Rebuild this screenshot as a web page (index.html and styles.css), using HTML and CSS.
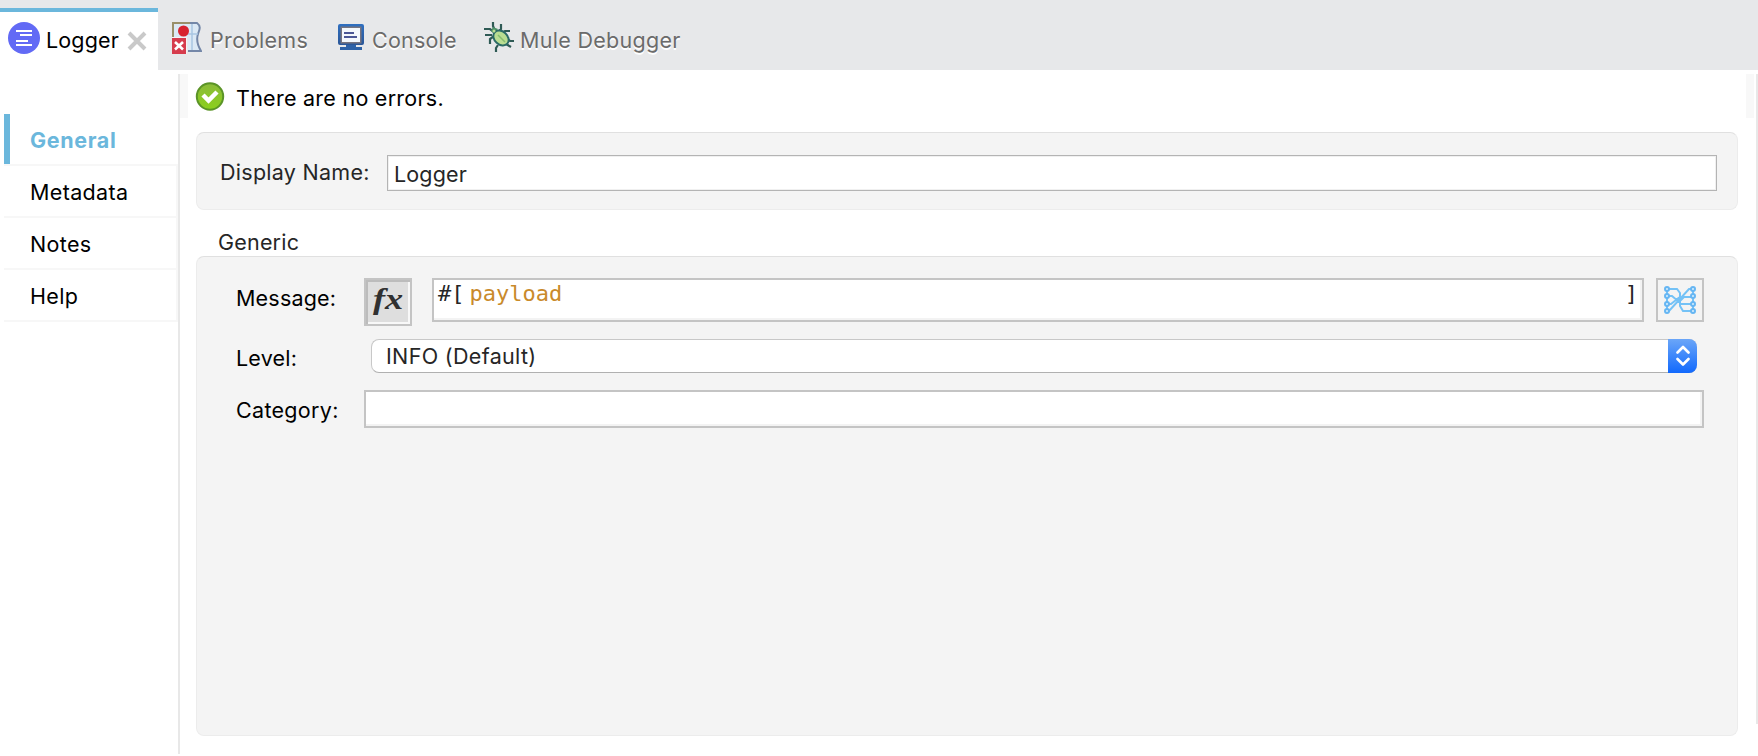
FILE: index.html
```html
<!DOCTYPE html>
<html lang="en">
<head>
<meta charset="utf-8">
<title>Logger</title>
<link rel="stylesheet" href="styles.css">
</head>
<body>
<header class="tabs">
  <div class="tab tab-active">
    <svg class="icon-logger" width="32" height="32" viewBox="0 0 32 32"><circle cx="16" cy="16" r="16" fill="#626af5"/><path d="M8 9h16M12 13h12M8 19h12M8 23h16" stroke="#fff" stroke-width="2"/></svg>
    <span class="label t-logger">Logger</span>
    <svg class="icon-close" width="20" height="20" viewBox="0 0 20 20"><path d="M2 2l16 16M18 2L2 18" stroke="#c9c9c9" stroke-width="4"/></svg>
  </div>
  <div class="tab tab-problems">
    <svg width="30" height="32" viewBox="0 0 30 32"><path d="M1 1h24c4 3 3 6 1 11c-2 6 0 12 3 17H16V16H1z" fill="#dce9f5"/><path d="M18 1h7c4 3 3 6 1 11c-2 6 0 12 3 17H16" fill="none" stroke="#7487a8" stroke-width="2"/><path d="M1 16V1h17" fill="none" stroke="#9a8f6a" stroke-width="2"/><path d="M20 2v26M15 12h11" stroke="#a9c6e2" stroke-width="1.500"/><circle cx="11.500" cy="9" r="5.500" fill="#d8222f"/><path d="M0 15h15v17H0z" fill="#f4f2f4"/><path d="M0 16h14v16H0z" fill="#d63c4d"/><path d="M3 20l8 7.500M11 20l-8 7.500" stroke="#fff" stroke-width="2.600"/></svg>
    <span class="label t-problems">Problems</span>
  </div>
  <div class="tab tab-console">
    <svg width="26" height="27" viewBox="0 0 26 27"><defs><linearGradient id="mon" x2="0" y2="1"><stop stop-color="#2f6fc0"/><stop offset="1" stop-color="#2a5698"/></linearGradient></defs><rect width="26" height="21" rx="2" fill="url(#mon)"/><rect x="2.500" y="2.500" width="21" height="17" fill="#77747f"/><rect x="4" y="4" width="18" height="14" fill="#f3f8fd"/><path d="M6 9h10M6 13h13" stroke="#4a5796" stroke-width="2"/><path d="M8 21h10v2h6v3H2v-3h6z" fill="#2d62a8"/></svg>
    <span class="label t-console">Console</span>
  </div>
  <div class="tab tab-debug">
    <svg width="30" height="31" viewBox="0 0 30 31"><g fill="none" stroke="#2f5a55" stroke-width="2.200"><path d="M9 0v4l2 5M17 2v5l-3 3M0 7h6l4 3M1 13h7M6 22v-5l4-3M12 30v-4l2-3M26 9h-5l-3 2M30 19h-4l-4-3M27 25l-5-3"/></g><path d="M9 5l5 2-4 5-3-3z" fill="#4f9068"/><ellipse cx="17" cy="16" rx="8.500" ry="6.500" transform="rotate(42 17 16)" fill="#b9dd92" stroke="#2b6a66" stroke-width="2"/><circle cx="10" cy="9" r="1.500" fill="#b9dd92"/><path d="M14 13l7 7" stroke="#86bd70" stroke-width="1.500"/></svg>
    <span class="label t-debug">Mule Debugger</span>
  </div>
</header>
<main class="body">
  <nav class="side">
    <div class="item item-active"><span class="t-general">General</span></div>
    <div class="item"><span class="t-metadata">Metadata</span></div>
    <div class="item"><span class="t-notes">Notes</span></div>
    <div class="item"><span class="t-help">Help</span></div>
  </nav>
  <section class="content">
    <div class="status">
      <svg width="30" height="30" viewBox="0 0 30 30"><defs><linearGradient id="ok" x2="0" y2="1"><stop stop-color="#8bbb3a"/><stop offset="1" stop-color="#8bd01c"/></linearGradient></defs><circle cx="15" cy="14.500" r="13.200" fill="url(#ok)" stroke="#5b9427" stroke-width="2"/><path d="M8 13l5.500 5.500L22 10" fill="none" stroke="#fff" stroke-width="4.500"/></svg>
      <span class="t-status">There are no errors.</span>
    </div>
    <div class="panel name-panel">
      <label class="t-display">Display Name:</label>
      <div class="name-input"><span class="t-value">Logger</span></div>
    </div>
    <h2 class="group-title"><span class="t-generic">Generic</span></h2>
    <div class="panel form">
      <div class="row row-message">
        <label class="t-message">Message:</label>
        <div class="fx"><span>fx</span></div>
        <div class="expr"><span class="hash">#[</span><span class="payload">payload</span><span class="close">]</span></div>
        <div class="map">
          <svg width="32" height="28" viewBox="0 0 32 28"><g fill="none" stroke="#74c2f6" stroke-width="2"><path d="M3 3h10l3 4v13l3 5h10M3 25h2L25 3h4M3 10h5l7 6 5-5h9M3 18h4l10-8M16 18h13M3 3v22M29 3v22"/></g><g fill="#d9effd" stroke="#66b6f3" stroke-width="2"><circle cx="3" cy="3" r="2"/><circle cx="3" cy="10" r="2"/><circle cx="3" cy="18" r="2"/><circle cx="3" cy="25" r="2"/><circle cx="29" cy="3" r="2"/><circle cx="29" cy="10" r="2"/><circle cx="29" cy="18" r="2"/><circle cx="29" cy="25" r="2"/></g></svg>
        </div>
      </div>
      <div class="row row-level">
        <label class="t-level">Level:</label>
        <div class="select"><span class="t-info">INFO (Default)</span>
          <div class="stepper"><svg width="14" height="22" viewBox="0 0 14 22"><path d="M1.500 7.500L7 2l5.500 5.500M1.500 14L7 19.500 12.500 14" fill="none" stroke="#fff" stroke-width="2.600" stroke-linecap="round" stroke-linejoin="round"/></svg></div>
        </div>
      </div>
      <div class="row row-category">
        <label class="t-category">Category:</label>
        <div class="cat-input"></div>
      </div>
    </div>
  </section>
</main>
</body>
</html>
```
FILE: styles.css
```css
* { box-sizing: border-box; }
body { margin: 0; width: 1758px; height: 756px; overflow: hidden; background: #fff; color: #000; font: 21.5px/26px Inter, "Liberation Sans", sans-serif; white-space: nowrap; }
svg { display: block; flex: none; }
span, label { flex: none; }

.tabs { display: flex; align-items: flex-start; height: 70px; padding-top: 8px; background: #e7e8ea; }
.tab { display: flex; align-items: flex-start; height: 62px; padding-top: 14px; color: #6b6b6b; text-shadow: 0 2px 0 #fff; }
.tab .label { margin-top: 5px; }
.tab-active { width: 158px; padding: 10px 0 0 8px; border-top: 4px solid #6bb7dc; background: #fff; color: #000; }
.tab-active .label { width: 80px; margin-left: 6px; letter-spacing: 0.15px; }
.icon-close { margin-top: 9px; margin-left: 1px; }
.tab-problems { width: 180px; padding-left: 14px; }
.tab-problems .label { margin-left: 8px; letter-spacing: 0.35px; }
.tab-console { width: 146px; }
.tab-console svg { margin-top: 2px; }
.tab-console .label { margin-left: 8px; letter-spacing: 0.2px; }
.tab-debug .label { margin-left: 6px; letter-spacing: 0.3px; }

.body { display: flex; height: 686px; }
.side { width: 180px; height: 680px; margin-top: 4px; padding: 40px 0 0 4px; border-right: 2px solid #e8e8e8; }
.item { height: 52px; padding: 13px 0 0 26px; border-bottom: 2px solid #f7f7f7; border-right: 2px solid #f7f7f7; letter-spacing: 0.35px; }
.item-active { border-right: 0; background: linear-gradient(#6bb7dc, #6bb7dc) 0 0 / 6px 50px no-repeat; color: #6bb7dc; font-weight: 700; letter-spacing: 0.65px; }

.content { width: 1578px; height: 650px; margin-top: 4px; border-right: 2px solid #e8e8e8; }
.status { display: flex; height: 44px; margin-right: 2px; padding: 8px 0 0 7px; border-left: 8px solid #f8f8f8; border-right: 8px solid #f8f8f8; }
.status span { margin: 3px 0 0 11px; letter-spacing: 0.26px; }
.panel { width: 1542px; margin-left: 16px; border: 1px solid #ececec; border-top-color: #e0e0e0; border-radius: 8px; background: #f4f4f4; }
.name-panel { display: flex; height: 78px; margin-top: 14px; padding: 22px 0 0 23px; color: #262626; }
.name-panel label { width: 167px; margin-top: 4px; letter-spacing: 0.27px; }
.name-input { width: 1330px; height: 36px; padding: 5px 0 0 6px; border: 1px solid #b4b4b4; background: #fff; box-shadow: inset 0 0 0 1px #f0f0f0; letter-spacing: 0.15px; }
.group-title { height: 46px; margin: 0; padding: 19px 0 0 38px; color: #262626; font-size: inherit; font-weight: 400; letter-spacing: 0.2px; }
.form { height: 480px; padding: 21px 0 0 39px; }
.row { display: flex; }
.row label { width: 128px; letter-spacing: 0.2px; }
.row-message { height: 61px; }
.row-message label { margin-top: 7px; }
.fx { width: 48px; height: 48px; padding-left: 1px; border: 2px solid #c4c4c4; background: #dedede; box-shadow: inset 2px 2px #bcbcbc, inset -2px -2px #f8f8f8; color: #303030; font: italic bold 29px/38px "Liberation Serif", serif; text-align: center; }
.fx span { display: inline-block; transform: scaleX(1.25); }
.expr { display: flex; width: 1212px; height: 44px; margin-left: 20px; padding: 1px 4px 0 4px; border: 2px solid #c4c4c4; background: #fff; box-shadow: inset -2px -2px #f3f3f3; color: #262626; font-family: "DejaVu Sans Mono", monospace; font-size: 22px; }
.payload { margin-left: 5px; color: #c98a2b; }
.close { margin-left: auto; }
.map { width: 48px; height: 44px; margin-left: 12px; padding: 6px; border: 2px solid #c4c4c4; }
.row-level { height: 51px; }
.row .t-level { width: 135px; margin-top: 6px; }
.select { display: flex; width: 1326px; height: 34px; padding: 3px 0 0 14px; border: 1px solid #c8c8c8; border-right: 0; border-bottom-color: #b0b0b0; border-radius: 8px; background: #fff; color: #262626; letter-spacing: 0.33px; }
.stepper { display: flex; align-items: center; justify-content: center; width: 29px; height: 34px; margin: -4px 0 0 auto; border-radius: 0 8px 8px 0; background: linear-gradient(#6ba6f8, #1169fd); }
.row-category label { margin-top: 7px; letter-spacing: 0.3px; }
.cat-input { width: 1340px; height: 38px; border: 2px solid #c4c4c4; background: #fff; box-shadow: inset -2px -2px #f3f3f3; }
```
